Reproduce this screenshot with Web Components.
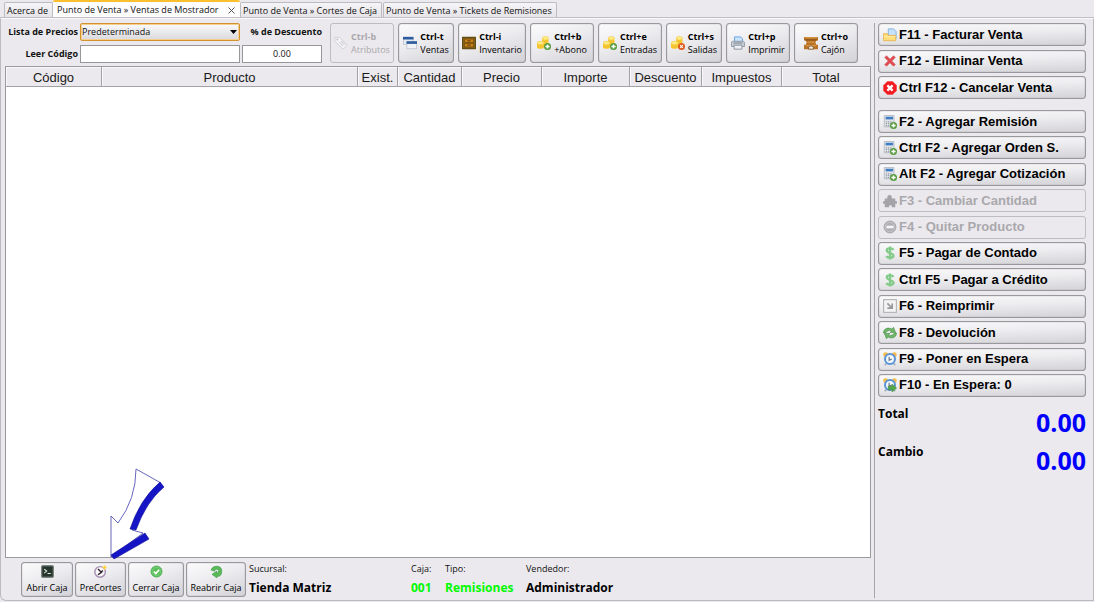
<!DOCTYPE html>
<html lang="es">
<head>
<meta charset="utf-8">
<title>Punto de Venta</title>
<style>
html,body{margin:0;height:100%}
body{background:#ebe9ed;font-family:"Open Sans","Noto Sans",sans-serif;color:#111}
</style>
</head>
<body>
<pos-app></pos-app>
<script>
const ICONS = {
  tag:`<g opacity=".8"><path d="M1 1.500h5l9 8.500-4.500 5L1 6z" fill="#f8f8fa" stroke="#c9c9cd"/><circle cx="3.800" cy="4" r="1.200" fill="#bbb"/><path d="M6 7l4.500 4.300M8 5.500l4.500 4.300" stroke="#c8c8cc" stroke-width="1.200"/></g>`,
  windows:`<rect x=".5" y="1.500" width="11" height="8" fill="#e8edf4" stroke="#c2c8d2"/><path d="M0 1h12v3H0z" fill="#2d5b9e"/><rect x="4.500" y="6.500" width="11" height="8" fill="#f0f2f6" stroke="#c2c8d2"/><path d="M4 6h12v3H4z" fill="#2d5b9e"/>`,
  cabinet:`<path d="M0 1h16v14H0z" fill="#80611d"/><path d="M.5 1.500h15v13H.5z" fill="none" stroke="#5c4716"/><path d="M3 3.500h10v4H3zM3 8.500h10v4H3z" fill="#d08518" stroke="#7c500d"/><path d="M6 5.500h4M6 10.500h4" stroke="#67420a" stroke-width="1.300"/>`,
  coins:`<path d="M6 2v9c0 2 7 2 7 0V2z" fill="#f7c934"/><ellipse cx="9.500" cy="2.500" rx="3.500" ry="2" fill="#ffec83" stroke="#f0c43a" stroke-width=".6"/><path d="M6 5c0 2 7 2 7 0M6 8c0 2 7 2 7 0" fill="none" stroke="#e6b32a" stroke-width=".6"/><path d="M0 8v5c0 2 8 2 8 0V8z" fill="#f7c934"/><ellipse cx="4" cy="8" rx="4" ry="1.900" fill="#ffec83" stroke="#f0c43a" stroke-width=".6"/><path d="M0 11c0 2 8 2 8 0" fill="none" stroke="#e6b32a" stroke-width=".6"/>`,
  plus:`<circle cx="12" cy="12" r="4" fill="#569b3d"/><path d="M12 9.600v4.800M9.600 12h4.800" stroke="#fff" stroke-width="1.700"/>`,
  minus:`<circle cx="12" cy="12" r="4" fill="#df5b20"/><path d="M10.500 10.500l3 3m0-3l-3 3" stroke="#fff" stroke-width="1.300"/>`,
  printer:`<path d="M4 7V1h7l2 2v4z" fill="#c9e5ff" stroke="#5b9de0"/><path d="M.5 7.500C.5 6 2 6 3 6h10c1 0 2.500.5 2.500 1.500V12H.5z" fill="#c6cbd3" stroke="#8d95a1"/><path d="M3.500 10.500h9V15h-9z" fill="#edf1f6" stroke="#858c98"/><path d="M3 8h10" stroke="#77808e"/>`,
  drawer:`<path d="M0 1h16v4h-2l-1 2 1 3h2v5H0v-5h2l1-3-1-2H0z" fill="#b97226"/><path d="M1 2h14M4 7h8M2 11h12" stroke="#e2a454"/><path d="M1 4.500h14" stroke="#79450f"/><path d="M5 15c0-5 6-5 6 0z" fill="#eee" stroke="#855321"/>`,
  folder:`<path d="M6 1h6l3 3v8H6z" fill="#c6e1fa" stroke="#79aede"/><path d="M.5 6.500H5l1 2h8.500v6H.5z" fill="#ffdc7a" stroke="#e8b550"/><path d="M1 10h13" stroke="#fff0ad"/>`,
  cross:`<path d="M2 4l2-2 4 4 4-4 2 2-4 4 4 4-2 2-4-4-4 4-2-2 4-4z" fill="#e0484e" stroke="#d4666a" stroke-width=".9"/>`,
  cancel:`<path d="M5 .5h6L15.500 5v6L11 15.500H5L.5 11V5z" fill="#f01c22" stroke="#f8484b" stroke-width=".8"/><path d="M5 5l6 6m0-6l-6 6" stroke="#fff" stroke-width="2.600"/>`,
  calc:`<path d="M1.500.5h11v13h-11z" fill="#e0e3e8" stroke="#b3b8c0"/><path d="M3 2h8.500v3H3z" fill="#3e7dc4"/><path d="M4 7v6M6.500 7v6M9 7v6" stroke="#99a1ac" stroke-width="1.500" stroke-dasharray="1.500 .7"/>`,
  puzzle:`<path d="M2 5h3c-1-5 6-5 5 0h4v3c3-1 3 4 0 3v4h-4c1-3-4-3-3 0H2v-4c-3 1-3-4 0-3z" fill="#a4a4a8"/>`,
  remove:`<circle cx="8" cy="8" r="6.800" fill="#b0b0b4" stroke="#9f9fa3"/><path d="M4 8h8" stroke="#f5f5f7" stroke-width="3"/><circle cx="8" cy="8" r="5.500" fill="none" stroke="#d3d3d6" stroke-width=".7"/>`,
  dollar:`<path d="M8 .5v15M12 4.500C10.500 2 4.300 2 4.300 5S12 8 12 11 5 14 4 11.500" fill="none" stroke="#84cb8a" stroke-width="2.700"/>`,
  shortcut:`<rect x=".7" y=".7" width="14.600" height="14.600" fill="#f3f3f4" stroke="#b4b4b6" stroke-width="1.300"/><path d="M5 5l5 5M10.500 5v5.500H5" fill="none" stroke="#98989b" stroke-width="1.900"/>`,
  refresh:`<path d="M.5 8C.5 3 6 1 10 3.500L12 1.500l2.500 6-6.500 0 2-1.700C7 4.500 4 5.500 3 8z" fill="#6db767" stroke="#3d8541" stroke-width=".6"/><path d="M15.500 8c0 5-5.500 7-9.500 4.500L4 14.500l-2.500-6 6.500 0-2 1.700c3 1.300 6 .3 7-2.200z" fill="#6db767" stroke="#3d8541" stroke-width=".6"/>`,
  clock:`<circle cx="3" cy="3" r="2.800" fill="#f3bb4b"/><circle cx="13" cy="3" r="2.800" fill="#f3bb4b"/><path d="M4 13l-2 2m10-2l2 2" stroke="#a6afbb" stroke-width="1.800"/><circle cx="8" cy="8" r="5.700" fill="#f4f9ff" stroke="#5a94d6" stroke-width="2.300"/><path d="M7 5.500v4l3-1.500" fill="none" stroke="#6b7280" stroke-width="1.300"/>`,
  go:`<path d="M6 9.500h4.500V7l5 4.500-5 4.500v-2.500H6z" fill="#53a849" stroke="#3f8c3a" stroke-width=".7"/>`,
  terminal:`<rect x="1" y="1" width="14" height="14" rx="1" fill="#25352c" stroke="#65716a" stroke-width="1.500"/><path d="M4 5l3 2.500L4 10M8 10.500h4" fill="none" stroke="#e2ece2" stroke-width="1.300"/>`,
  precut:`<circle cx="7.500" cy="8.500" r="6.500" fill="#fbf8f9" stroke="#a58fb2" stroke-width="1.800"/><path d="M5 5l4 4-4 3M8 9l3-2" fill="none" stroke="#30262f" stroke-width="1.800"/><path d="M13 0l1 2 2 1-2 1-1 2-1-2-2-1 2-1z" fill="#ffcf27" stroke="#ffe17b" stroke-width=".6"/>`,
  ok:`<circle cx="8" cy="8" r="6.800" fill="#5abf5a" stroke="#49a652"/><circle cx="8" cy="8" r="5.300" fill="none" stroke="#93db8d" stroke-width=".6"/><path d="M4.800 8.200L7.200 10.500l4-4.700" fill="none" stroke="#fff" stroke-width="2"/>`,
  reopen:`<path d="M1.500 6.500C2 0 14.500-.5 14.500 7S10 14 8.500 14v2L2.500 11.500 8.500 7.500v2.700C11.500 9 11 5 8 5.200 5.800 5.300 6 7.500 6 7.500z" fill="#5aba58" stroke="#379346" stroke-width=".7"/>`
};
class PosIcon extends HTMLElement{
  connectedCallback(){
    const names=this.getAttribute('name').split(' ');
    this.attachShadow({mode:'open'}).innerHTML=`<style>:host{display:block;flex:none;width:var(--icon,14px);height:var(--icon,14px)}svg{display:block;width:100%;height:100%}</style><svg viewBox="0 0 16 16" aria-hidden="true">${names.map(n=>ICONS[n]).join('')}</svg>`;
  }
}
customElements.define('pos-icon',PosIcon);

const BUTTON_CSS=`
button{box-sizing:border-box;width:100%;height:100%;margin:0;border:1px solid #99989d;border-radius:3px;
 background:linear-gradient(160deg,#fbfbfc 0%,#eeedf0 40%,#d3d2d7 100%);box-shadow:inset 0 0 1px #77777b;color:#000;font-family:inherit;display:flex;align-items:center}
button:disabled{background:#ebe9ed;border-color:#bdbcc1;box-shadow:none;color:#a9a8ac}`;

class ToolButton extends HTMLElement{
  connectedCallback(){
    const d=this.hasAttribute('disabled')?'disabled':'';
    this.attachShadow({mode:'open'}).innerHTML=`<style>:host{display:block;height:40px}${BUTTON_CSS}
    button{justify-content:center;gap:3px;padding:0;text-align:left;font-size:9px;line-height:13px;white-space:nowrap}b{display:block}</style>
    <button type="button" ${d}><pos-icon name="${this.getAttribute('icon')}"></pos-icon><span><b>${this.getAttribute('keys')}</b><slot></slot></span></button>`;
  }
}
customElements.define('tool-button',ToolButton);

class ActionButton extends HTMLElement{
  connectedCallback(){
    const d=this.hasAttribute('disabled')?'disabled':'';
    this.attachShadow({mode:'open'}).innerHTML=`<style>:host{display:block;height:23px}${BUTTON_CSS}
    button{gap:2px;padding:0 4px;font:bold 13px/16px "Liberation Sans",Arial,sans-serif;white-space:nowrap}
    button:not(:disabled){background:linear-gradient(178deg,#fafafb 0%,#edecef 45%,#d3d2d6 100%)}</style>
    <button type="button" ${d}><pos-icon name="${this.getAttribute('icon')}"></pos-icon><span><slot></slot></span></button>`;
  }
}
customElements.define('action-button',ActionButton);

class CajaButton extends HTMLElement{
  connectedCallback(){
    this.attachShadow({mode:'open'}).innerHTML=`<style>:host{display:block;height:35px;--icon:13px}${BUTTON_CSS}
    button{flex-direction:column;justify-content:center;gap:3px;padding:0;font-size:9px;line-height:13px;white-space:nowrap}</style>
    <button type="button"><pos-icon name="${this.getAttribute('icon')}"></pos-icon><span><slot></slot></span></button>`;
  }
}
customElements.define('caja-button',CajaButton);

class PosTabs extends HTMLElement{
  connectedCallback(){
    this.attachShadow({mode:'open'}).innerHTML=`<style>
    :host{display:block}
    nav{display:flex;align-items:flex-end;height:17px;padding-left:4px;border-bottom:1px solid #c0bfc4;font-size:9px;line-height:13px}
    a{box-sizing:border-box;height:15px;padding:1px 2px;color:#111;text-decoration:none;white-space:nowrap;border:1px solid #bcbbc0;border-bottom:0;border-radius:2px 2px 0 0;background:linear-gradient(#f5f4f6,#e6e4e8)}
    .t1{width:49px}.t2{width:187px}.t3{width:142px;margin-right:1px}.t4{width:174px}
    .t2{display:flex;justify-content:space-between;height:17px;padding:1px 4px;border:0;border-top:2px solid #fcc02f;background:#fdfdfd}
    svg{width:7px;height:7px;margin:4px 1px 0}
    </style><nav>
    <a class="t1" href="#acerca">Acerca de</a>
    <a class="t2" href="#ventas" aria-current="page">Punto de Venta » Ventas de Mostrador<svg viewBox="0 0 7 7" aria-hidden="true"><path d="M.5.500l6 6m0-6l-6 6" stroke="#555"/></svg></a>
    <a class="t3" href="#cortes">Punto de Venta » Cortes de Caja</a>
    <a class="t4" href="#tickets">Punto de Venta » Tickets de Remisiones</a></nav>`;
  }
}
customElements.define('pos-tabs',PosTabs);

class SaleForm extends HTMLElement{
  connectedCallback(){
    this.attachShadow({mode:'open'}).innerHTML=`<style>
    :host{display:block}
    form{display:grid;grid-template-columns:73px 160px 80px;grid-template-rows:18px 18px;gap:4px 2px;font-size:9px;line-height:18px}
    label{font-weight:bold;text-align:right;white-space:nowrap}
    input,select{box-sizing:border-box;width:100%;height:18px;margin:0;font:inherit;color:#111;border:1px solid #97979b;border-radius:0;background:#fff;outline:0}
    select{appearance:none;padding:0 1px;line-height:16px;border:1px solid #d3922e;border-radius:2px;box-shadow:inset 0 0 0 1px #f4cf8e;
      background:linear-gradient(#fafafb,#dad9dd)}
    .pick{position:relative}.pick svg{position:absolute;right:3px;top:7px;width:7px;height:4px;pointer-events:none}
    #dto{text-align:center}
    </style><form>
    <label for="lista">Lista de Precios</label>
    <div class="pick"><select id="lista"><option>Predeterminada</option></select><svg viewBox="0 0 7 4" aria-hidden="true"><path d="M0 0h7L3.500 4z"/></svg></div>
    <label for="dto">% de Descuento</label>
    <label for="codigo">Leer Código</label><input id="codigo" type="text"><input id="dto" type="text" value="0.00">
    </form>`;
  }
}
customElements.define('sale-form',SaleForm);

class SaleTable extends HTMLElement{
  connectedCallback(){
    const cols=[['Código',96],['Producto',0],['Exist.',40],['Cantidad',64],['Precio',80],['Importe',88],['Descuento',72],['Impuestos',80],['Total',88]];
    this.attachShadow({mode:'open'}).innerHTML=`<style>
    :host{display:block;position:relative;background:#fff;border:1px solid #9b9b9f;box-sizing:border-box}
    table{width:100%;border-collapse:separate;border-spacing:0;table-layout:fixed}
    th{box-sizing:border-box;height:20px;padding:2px 0 0;font:13px/17px "Liberation Sans",Arial,sans-serif;color:#1a1a1a;background:#ebe9ed;border-right:1px solid #a2a2a6;border-bottom:1px solid #a2a2a6;box-shadow:inset 1px 1px #f8f8fa;white-space:nowrap}
    th:last-child{border-right:0}
    .arrow{position:absolute;left:104px;bottom:-2px;width:56px;height:91px}
    </style><table><colgroup>${cols.map(c=>`<col${c[1]?` style="width:${c[1]}px"`:''}>`).join('')}</colgroup>
    <thead><tr>${cols.map(c=>`<th scope="col">${c[0]}</th>`).join('')}</tr></thead><tbody></tbody></table>
    <svg class="arrow" viewBox="0 0 56 91" aria-hidden="true">
    <path d="M26 1L51 15Q34 31 22 62L33 65L1 89V48L8 55Q26 31 26 1z" fill="#fff" stroke="#5555b5" stroke-width=".9"/>
    <path d="M50 14l4 5Q36 34 26 62l-6-1Q30 31 50 14zM35 65l4 6L4 91l-3-4z" fill="#1515c5" stroke="#101098" stroke-width=".6"/></svg>`;
  }
}
customElements.define('sale-table',SaleTable);

class StatusField extends HTMLElement{
  connectedCallback(){
    this.attachShadow({mode:'open'}).innerHTML=`<style>:host{display:block;white-space:nowrap}small{display:block;font-size:9px;line-height:14px}b{display:block;margin-top:4px;font-size:12px;line-height:16px;color:var(--value,#000)}</style><small>${this.getAttribute('label')}</small><b><slot></slot></b>`;
  }
}
customElements.define('status-field',StatusField);

class AmountRow extends HTMLElement{
  connectedCallback(){
    this.attachShadow({mode:'open'}).innerHTML=`<style>:host{display:flex;justify-content:space-between;height:38px;color:#000}span{font-weight:bold;font-size:12px;line-height:16px}b{font-size:25px;line-height:32px;color:#00f}</style><span>${this.getAttribute('label')}</span><b><slot></slot></b>`;
  }
}
customElements.define('amount-row',AmountRow);

class PosApp extends HTMLElement{
  connectedCallback(){
    this.attachShadow({mode:'open'}).innerHTML=`<style>
    :host{display:flex;flex-direction:column;min-height:100vh}
    .body{flex:1;display:grid;grid-template-columns:minmax(0,1fr) 208px;gap:7px;margin-bottom:1px;padding:4px 7px 2px 4px;border:1px solid #bbbabf;border-top-color:#f8f8fa;border-bottom-left-radius:6px}
    main{display:flex;flex-direction:column;min-width:0}
    .bar{display:flex;gap:8px;align-items:flex-start;margin-bottom:3px}
    .tools{display:flex;gap:4px}
    .w56{width:56px}.w64{width:64px}.w68{width:68px}
    sale-table{flex:1}
    footer{display:flex;gap:2px;padding:4px 0 1px 16px}
    .info{display:grid;grid-template-columns:162px 34px 81px auto;margin-left:1px}
    .green{--value:#00fa00}
    aside{position:relative}
    aside::before{content:"";position:absolute;left:-4px;top:0;bottom:0;width:1px;background:#a5a5aa}
    .group{display:flex;flex-direction:column;justify-content:space-between}
    .sale{height:76px;margin-bottom:11px}.items{height:287px;margin-bottom:9px}
    </style>
    <pos-tabs></pos-tabs>
    <div class="body">
    <main>
      <div class="bar"><sale-form></sale-form>
        <div class="tools">
        <tool-button class="w64" icon="tag" keys="Ctrl-b" disabled>Atributos</tool-button>
        <tool-button class="w56" icon="windows" keys="Ctrl-t">Ventas</tool-button>
        <tool-button class="w68" icon="cabinet" keys="Ctrl-i">Inventario</tool-button>
        <tool-button class="w64" icon="coins plus" keys="Ctrl+b">+Abono</tool-button>
        <tool-button class="w64" icon="coins plus" keys="Ctrl+e">Entradas</tool-button>
        <tool-button class="w56" icon="coins minus" keys="Ctrl+s">Salidas</tool-button>
        <tool-button class="w64" icon="printer" keys="Ctrl+p">Imprimir</tool-button>
        <tool-button class="w64" icon="drawer" keys="Ctrl+o">Cajón</tool-button>
        </div></div>
      <sale-table></sale-table>
      <footer>
        <caja-button style="width:52px" icon="terminal">Abrir Caja</caja-button>
        <caja-button style="width:51px" icon="precut">PreCortes</caja-button>
        <caja-button style="width:56px" icon="ok">Cerrar Caja</caja-button>
        <caja-button style="width:60px" icon="reopen">Reabrir Caja</caja-button>
        <div class="info">
        <status-field label="Sucursal:">Tienda Matriz</status-field>
        <status-field class="green" label="Caja:">001</status-field>
        <status-field class="green" label="Tipo:">Remisiones</status-field>
        <status-field label="Vendedor:">Administrador</status-field></div>
      </footer>
    </main>
    <aside>
      <div class="group sale">
      <action-button icon="folder">F11 - Facturar Venta</action-button>
      <action-button icon="cross">F12 - Eliminar Venta</action-button>
      <action-button icon="cancel">Ctrl F12 - Cancelar Venta</action-button></div>
      <div class="group items">
      <action-button icon="calc plus">F2 - Agregar Remisión</action-button>
      <action-button icon="calc plus">Ctrl F2 - Agregar Orden S.</action-button>
      <action-button icon="calc plus">Alt F2 - Agregar Cotización</action-button>
      <action-button icon="puzzle" disabled>F3 - Cambiar Cantidad</action-button>
      <action-button icon="remove" disabled>F4 - Quitar Producto</action-button>
      <action-button icon="dollar">F5 - Pagar de Contado</action-button>
      <action-button icon="dollar">Ctrl F5 - Pagar a Crédito</action-button>
      <action-button icon="shortcut">F6 - Reimprimir</action-button>
      <action-button icon="refresh">F8 - Devolución</action-button>
      <action-button icon="clock">F9 - Poner en Espera</action-button>
      <action-button icon="clock go">F10 - En Espera: 0</action-button></div>
      <amount-row label="Total">0.00</amount-row>
      <amount-row label="Cambio">0.00</amount-row>
    </aside></div>`;
  }
}
customElements.define('pos-app',PosApp);
</script>
</body>
</html>
